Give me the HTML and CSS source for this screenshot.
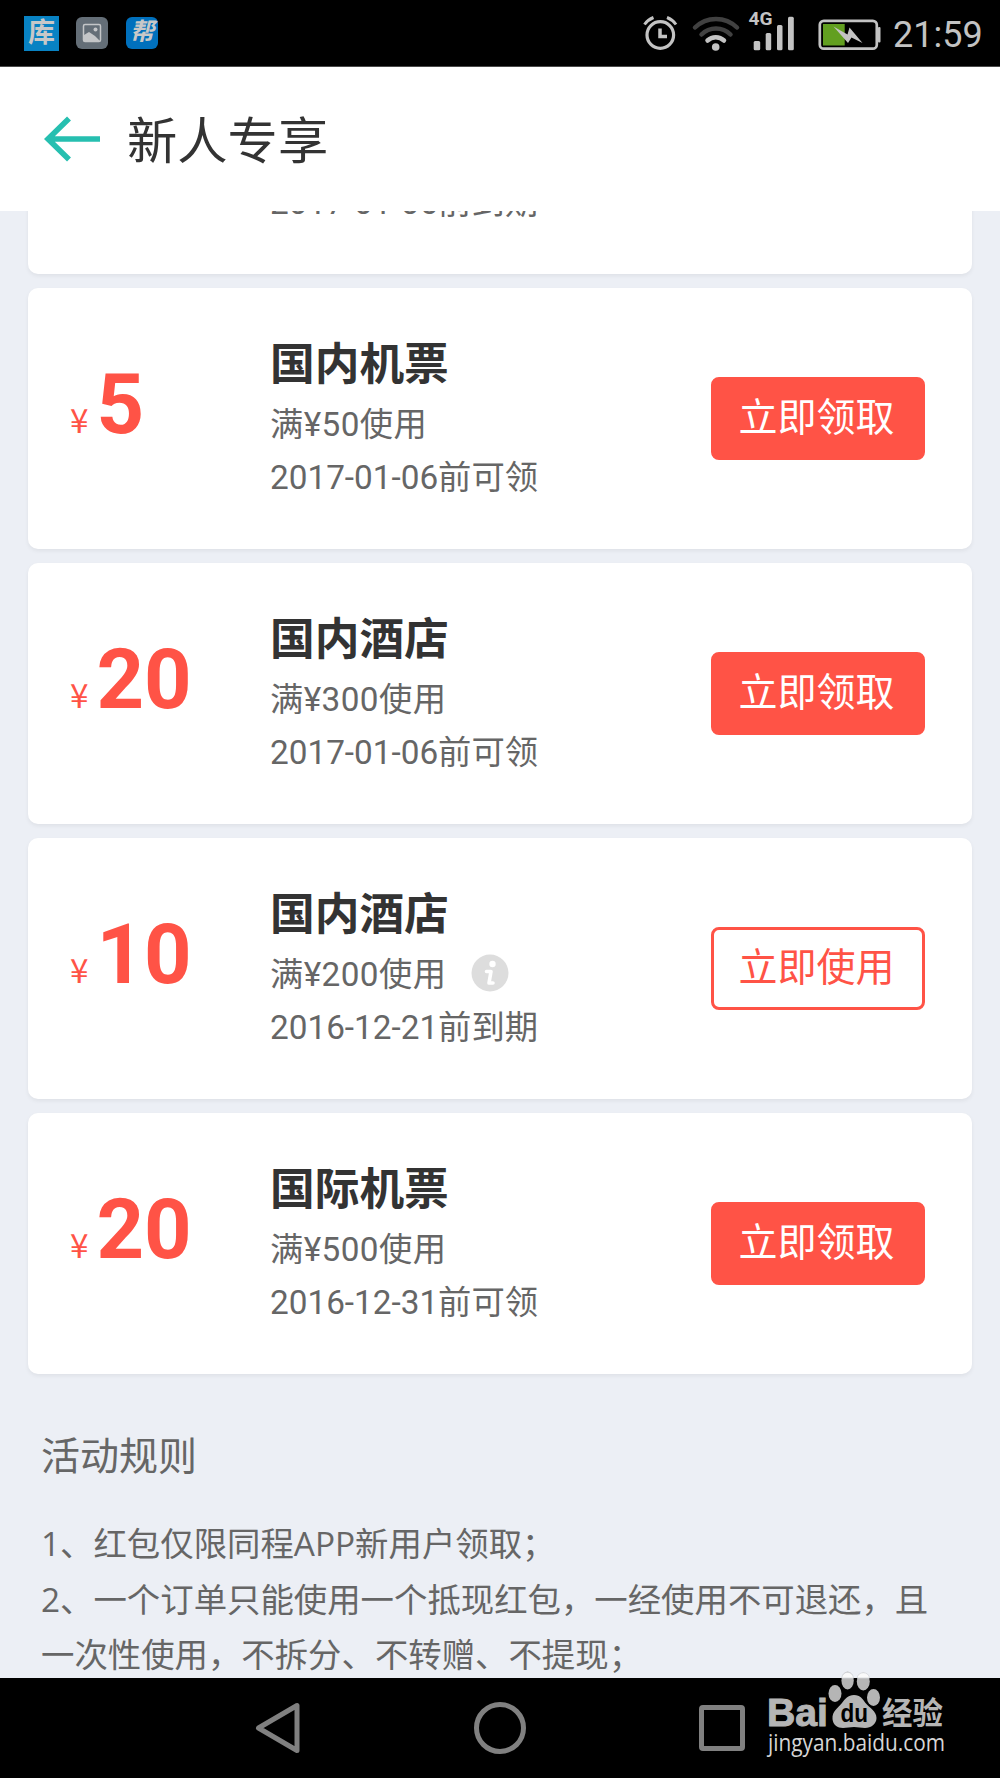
FILE: index.html
```html
<!DOCTYPE html>
<html lang="zh-CN">
<head>
    <meta charset="UTF-8">
    <meta name="viewport" content="width=device-width, initial-scale=1.0">
    <title>新人专享</title>
    <link rel="stylesheet" href="styles.css">
</head>
<body>

    <!-- Status bar -->
    <div class="status-bar">
        <div class="notifications">
            <span class="app-icon app-ku">库</span>
            <svg class="app-gallery" width="32" height="32" viewBox="0 0 32 32">
                <rect width="32" height="32" rx="6" fill="#646e77"/>
                <rect x="7.5" y="7.5" width="17" height="17" rx="1.5" fill="none" stroke="#c4c6c8" stroke-width="1.5"/>
                <path d="M8 18l5-3 6 4 5 5v1H8z" fill="#c4c6c8"/>
                <circle cx="19.5" cy="12.5" r="2" fill="#c4c6c8"/>
            </svg>
            <span class="app-icon app-bang">帮</span>
        </div>
        <div class="indicators">
            <svg width="246" height="66" viewBox="640 0 246 66">
                <!-- alarm -->
                <g fill="none" stroke="#c3c3c3" stroke-width="3">
                    <circle cx="660.3" cy="35" r="13.3" stroke-width="3.2"/>
                    <path d="M660 28.5v8h7" stroke-width="3.5"/>
                    <path d="M644.5 24.5a20 20 0 0 1 9-7M676 24.5a20 20 0 0 0-9-7"/>
                </g>
                <!-- wifi -->
                <g fill="none" stroke-linecap="round" stroke-width="4.5">
                    <path d="M695 27.5a30 30 0 0 1 42 0" stroke="#414141"/>
                    <path d="M701.5 34.5a20.5 20.5 0 0 1 29 0" stroke="#414141"/>
                    <path d="M707.5 40.5a12 12 0 0 1 16.5 0" stroke="#c3c3c3"/>
                </g>
                <circle cx="715.7" cy="47" r="3.8" fill="#c3c3c3"/>
                <!-- signal -->
                <text x="748.5" y="25" class="network" textLength="24" lengthAdjust="spacingAndGlyphs">4G</text>
                <g fill="#c3c3c3">
                    <rect x="753.7" y="41" width="6.5" height="9.3" rx="1.5"/>
                    <rect x="765.7" y="33" width="5.5" height="17.3" rx="1.5"/>
                    <rect x="777" y="25" width="5.5" height="25.3" rx="1.5"/>
                    <rect x="788" y="16.7" width="5.8" height="33.6" rx="1.5"/>
                </g>
                <!-- battery -->
                <rect x="819.8" y="20.8" width="57" height="27.9" rx="4" fill="none" stroke="#c3c3c3" stroke-width="2.7"/>
                <rect x="878" y="27" width="2.5" height="15.5" rx="1" fill="#c3c3c3"/>
                <rect x="823" y="24" width="21.7" height="21.5" fill="#629f20"/>
                <path d="M833.5 26.5l14 8 2-7 13 15.5-11-5.5-3.5 5.5z" fill="#c3c3c3"/>
            </svg>
            <span class="time">21:59</span>
        </div>
    </div>

    <!-- Title bar -->
    <div class="header">
        <svg class="back" width="58" height="50" viewBox="0 0 58 50">
            <path d="M56 25H5M25 4.5L4 25l21 20.5" fill="none" stroke="#26bfb0" stroke-width="5.6"/>
        </svg>
        <h1>新人专享</h1>
    </div>

    <div class="content">
        <div class="coupon-list">
            <div class="coupon">
                <div class="price"><span class="yen">¥</span>5</div>
                <div class="info">
                    <h2>国内机票</h2>
                    <p class="limit">满¥50使用</p>
                    <p>2017-01-06前到期</p>
                </div>
                <a class="btn btn-use">立即使用</a>
            </div>
            <div class="coupon">
                <div class="price"><span class="yen">¥</span>5</div>
                <div class="info">
                    <h2>国内机票</h2>
                    <p class="limit">满¥50使用</p>
                    <p>2017-01-06前可领</p>
                </div>
                <a class="btn">立即领取</a>
            </div>
            <div class="coupon">
                <div class="price"><span class="yen">¥</span>20</div>
                <div class="info">
                    <h2>国内酒店</h2>
                    <p class="limit">满¥300使用</p>
                    <p>2017-01-06前可领</p>
                </div>
                <a class="btn">立即领取</a>
            </div>
            <div class="coupon">
                <div class="price"><span class="yen">¥</span>10</div>
                <div class="info">
                    <h2>国内酒店</h2>
                    <p class="limit">满¥200使用
                        <svg class="tip" width="38" height="38" viewBox="0 0 38 38">
                            <circle cx="19" cy="19" r="18.5" fill="#ddd"/>
                            <circle cx="21.5" cy="10" r="3.2" fill="#fff"/>
                            <path d="M15.5 17.5H20L18 29h4" fill="none" stroke="#fff" stroke-width="3.6" stroke-linecap="round" stroke-linejoin="round"/>
                        </svg>
                    </p>
                    <p>2016-12-21前到期</p>
                </div>
                <a class="btn btn-use">立即使用</a>
            </div>
            <div class="coupon">
                <div class="price"><span class="yen">¥</span>20</div>
                <div class="info">
                    <h2>国际机票</h2>
                    <p class="limit">满¥500使用</p>
                    <p>2016-12-31前可领</p>
                </div>
                <a class="btn">立即领取</a>
            </div>
        </div>

        <div class="rules">
            <h3>活动规则</h3>
            <p>1、红包仅限同程APP新用户领取&#xFF1B;</p>
            <p>2、一个订单只能使用一个抵现红包&#xFF0C;一经使用不可退还&#xFF0C;且<br>一次性使用&#xFF0C;不拆分、不转赠、不提现&#xFF1B;</p>
        </div>
    </div>

    <!-- Navigation bar -->
    <div class="nav-bar">
        <svg width="46" height="54" viewBox="0 0 46 54">
            <path d="M42 4.5v45L3.5 27z" fill="none" stroke="#808080" stroke-width="5" stroke-linejoin="round"/>
        </svg>
        <svg width="54" height="54" viewBox="0 0 54 54">
            <circle cx="27" cy="27" r="23.5" fill="none" stroke="#808080" stroke-width="5"/>
        </svg>
        <svg width="46" height="54" viewBox="0 0 46 54">
            <rect x="2.5" y="6.5" width="41" height="41" rx="1.5" fill="none" stroke="#808080" stroke-width="5"/>
        </svg>
    </div>

    <!-- Baidu Jingyan logo -->
    <svg class="watermark" width="190" height="100" viewBox="760 1665 190 100">
        <g fill="#b5b5b5">
            <text x="767" y="1726" class="wm-name" textLength="61" lengthAdjust="spacingAndGlyphs">Bai</text>
            <ellipse cx="835" cy="1693.5" rx="6.5" ry="8.5"/>
            <ellipse cx="847.6" cy="1680.5" rx="6.2" ry="9"/>
            <ellipse cx="863.3" cy="1681.5" rx="6.5" ry="9"/>
            <ellipse cx="873.5" cy="1697.5" rx="6.5" ry="8.5"/>
            <path d="M854 1695c-6 0-9 4-12 8-4 5-10 8-9.5 16 .5 6 5 9 10.5 9 4 0 7-1 11-1s7 1 11 1c6 0 11.5-4 11.5-10 0-7-7-10-11-15-3-4-5-8-11.5-8z"/>
        </g>
        <g fill="#fafafa" stroke="#d5d8dc" stroke-width=".8">
            <path d="M841.6 1678a6.2 7.5 0 0 1 12 0zM857 1678a6.5 7 0 0 1 12.6 0z"/>
        </g>
        <text x="840.5" y="1722" class="wm-du" textLength="27.5" lengthAdjust="spacingAndGlyphs">du</text>
        <text x="882" y="1724" class="wm-cn" textLength="61" lengthAdjust="spacingAndGlyphs">经验</text>
        <text x="768" y="1751" class="wm-url" textLength="177" lengthAdjust="spacingAndGlyphs">jingyan.baidu.com</text>
    </svg>

</body>
</html>
```
FILE: styles.css
```css
* {
    margin: 0;
    padding: 0;
    box-sizing: border-box;
}
body {
    height: 1778px;
    display: flex;
    flex-direction: column;
    overflow: hidden;
    background: #eceff5;
    color: #666;
    font-family: Roboto, "Noto Sans CJK SC", sans-serif;
}
svg {
    display: block;
    flex: none;
}

/* status bar */
.status-bar {
    height: 67px;
    flex: none;
    display: flex;
    justify-content: space-between;
    background: #000;
    border-bottom: 1px solid #4a4a4a;
    padding: 0 17px 0 24px;
}
.notifications {
    display: flex;
    align-items: center;
}
.app-icon {
    color: #c8c8c8;
    text-align: center;
    font-weight: bold;
}
.app-ku {
    width: 35px;
    height: 35px;
    line-height: 34px;
    font-size: 27px;
    background: #0882c3;
}
.app-gallery {
    margin: 0 18px 0 17px;
}
.app-bang {
    width: 32px;
    height: 32px;
    line-height: 31px;
    font-size: 24px;
    font-style: italic;
    border-radius: 6px;
    background: #0070bd;
}
.indicators {
    display: flex;
    align-items: center;
}
.network {
    font: bold 18.5px Roboto, sans-serif;
    fill: #c3c3c3;
}
.time {
    width: 90px;
    margin-left: 7px;
    padding-top: 3px;
    font-size: 36px;
    color: #c3c3c3;
}

/* title bar */
.header {
    height: 144px;
    flex: none;
    display: flex;
    align-items: center;
    background: #fff;
    padding: 0 44px;
}
.back {
    margin-right: 25px;
}
.header h1 {
    font-size: 50.3px;
    font-weight: normal;
    color: #333;
    line-height: 76px;
    padding-top: 5px;
}

/* coupons */
.content {
    flex: 1;
    min-height: 0;
    overflow: hidden;
}
.coupon-list {
    margin-top: -198px;
    padding: 0 28px;
    display: flex;
    flex-direction: column;
    gap: 14px;
}
.coupon {
    height: 261px;
    display: flex;
    background: #fff;
    border-radius: 10px;
    box-shadow: 0 2px 4px rgba(0, 0, 0, 0.06);
    padding: 0 47px 0 42px;
}
.price {
    width: 200px;
    padding-top: 68px;
    line-height: 98px;
    font-size: 83px;
    font-weight: bold;
    color: #ff5346;
    white-space: nowrap;
}
.yen {
    font: 33.3px "Noto Sans CJK SC", sans-serif;
    margin-right: 8px;
}
.info {
    flex: 1;
    padding-top: 47px;
}
.info h2 {
    font-size: 44.7px;
    line-height: 61px;
    margin-bottom: 2px;
    color: #333;
}
.info p {
    display: flex;
    align-items: center;
    font-size: 33.3px;
    line-height: 53px;
    height: 53px;
}
.info .limit {
    letter-spacing: 0.4px;
}
.tip {
    margin: -4px 0 0 25px;
}
.btn {
    width: 214px;
    height: 83px;
    margin-top: 89px;
    padding-right: 3px;
    border: 3px solid #ff5346;
    border-radius: 8px;
    background: #ff5346;
    color: #fff;
    font-size: 39px;
    line-height: 76px;
    text-align: center;
}
.btn-use {
    background: #fff;
    color: #ff5346;
}

/* rules */
.rules {
    padding: 52px 41px 0;
    font-family: "Open Sans", "Noto Sans CJK SC", sans-serif;
    white-space: nowrap;
}
.rules h3 {
    font-size: 39px;
    font-weight: normal;
    line-height: 58px;
    margin-bottom: 32px;
}
.rules p {
    font-size: 33.4px;
    line-height: 55.6px;
}

/* navigation bar */
.nav-bar {
    height: 100px;
    flex: none;
    display: flex;
    justify-content: space-between;
    align-items: center;
    background: #000;
    padding: 0 255px;
}

.watermark {
    position: absolute;
    left: 760px;
    top: 1665px;
}
.wm-name {
    font: bold 39px "Liberation Sans", sans-serif;
    stroke: #b5b5b5;
    stroke-width: 1px;
}
.wm-du {
    font: bold 25px "Liberation Sans", sans-serif;
    fill: #000;
}
.wm-cn {
    font: bold 31px "Noto Sans CJK SC", sans-serif;
    fill: #b5b5b5;
}
.wm-url {
    font: 23px "Open Sans", sans-serif;
    fill: #d6d6d6;
}
```
